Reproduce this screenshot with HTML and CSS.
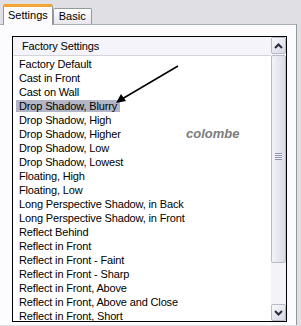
FILE: index.html
```html
<!DOCTYPE html>
<html lang="en">
<head>
    <meta charset="UTF-8">
    <title>Settings</title>
    <link rel="stylesheet" href="styles.css">
</head>
<body>
    <div class="tabs">
        <div class="tab active">Settings</div>
        <div class="tab">Basic</div>
    </div>

    <div class="panel">
        <div class="listbox">
            <div class="list-content">
                <div class="list-header">Factory Settings</div>
                <ul class="items">
                    <li><span>Factory Default</span></li>
                    <li><span>Cast in Front</span></li>
                    <li><span>Cast on Wall</span></li>
                    <li class="selected"><span>Drop Shadow, Blurry</span></li>
                    <li><span>Drop Shadow, High</span></li>
                    <li><span>Drop Shadow, Higher</span></li>
                    <li><span>Drop Shadow, Low</span></li>
                    <li><span>Drop Shadow, Lowest</span></li>
                    <li><span>Floating, High</span></li>
                    <li><span>Floating, Low</span></li>
                    <li><span>Long Perspective Shadow, in Back</span></li>
                    <li><span>Long Perspective Shadow, in Front</span></li>
                    <li><span>Reflect Behind</span></li>
                    <li><span>Reflect in Front</span></li>
                    <li><span>Reflect in Front - Faint</span></li>
                    <li><span>Reflect in Front - Sharp</span></li>
                    <li><span>Reflect in Front, Above</span></li>
                    <li><span>Reflect in Front, Above and Close</span></li>
                    <li><span>Reflect in Front, Short</span></li>
                </ul>
            </div>
            <div class="scrollbar">
                <div class="sb-btn">
                    <svg width="9" height="6" viewBox="0 0 9 6"><path d="M1 5 L4.5 1.5 L8 5" fill="none" stroke="#2b2b3a" stroke-width="2"/></svg>
                </div>
                <div class="sb-track">
                    <div class="sb-thumb">
                        <div class="grip"></div>
                    </div>
                </div>
                <div class="sb-btn">
                    <svg width="9" height="6" viewBox="0 0 9 6"><path d="M1 1 L4.5 4.5 L8 1" fill="none" stroke="#2b2b3a" stroke-width="2"/></svg>
                </div>
            </div>
        </div>
    </div>

    <!-- annotation drawn over the list -->
    <svg class="pointer" width="301" height="326" viewBox="0 0 301 326">
        <line x1="178" y1="66" x2="122" y2="99" stroke="#000" stroke-width="1.5"/>
        <polygon points="116,103 121,94 126,101" fill="#000"/>
    </svg>
    <div class="watermark">colombe</div>
</body>
</html>
```

FILE: styles.css
```css
body {
    margin: 0;
    width: 301px;
    height: 326px;
    overflow: hidden;
    background: #e0dfe3;
    font-family: "Liberation Sans", Arial, sans-serif;
    font-size: 11px;
    color: #000;
    position: relative;
}
.tabs {
    display: flex;
    align-items: flex-end;
    height: 20px;
    padding: 4px 0 0 3px;
}
.tab {
    box-sizing: border-box;
    height: 16px;
    padding: 0 5px;
    line-height: 15px;
    border: 1px solid #919b9c;
    border-bottom: none;
    border-radius: 2px 2px 0 0;
    background: linear-gradient(#ffffff, #e6e6ec);
}
.tab.active {
    height: 21px;
    margin-bottom: -1px;
    padding: 0 4px;
    line-height: 17px;
    border-top: 3px solid #f5a533;
    background: #fcfcfe;
    position: relative;
    z-index: 1;
}
.panel {
    width: 297px;
    height: 301px;
    box-sizing: border-box;
    border-top: 1px solid #a9b0b8;
    border-right: 1px solid #919b9c;
    background: #fcfcfe;
    padding: 11px 0 0 12px;
}
.listbox {
    display: flex;
    width: 275px;
    height: 286px;
    box-sizing: border-box;
    border: 1px solid #000;
    background: #fff;
}
.list-content {
    flex: 1;
    overflow: hidden;
    letter-spacing: -0.15px;
}
.list-header {
    height: 18px;
    line-height: 18px;
    padding-left: 9px;
    background: #f4f4fa;
    border-bottom: 1px solid #d4d4dc;
}
.items {
    list-style: none;
    margin: 0;
    padding: 1px 0 0 3px;
}
.items li {
    height: 14px;
    line-height: 14px;
    white-space: nowrap;
}
.items li span {
    padding: 0 3px;
}
.items li.selected span {
    background: #b2b5c6;
}
.scrollbar {
    width: 15px;
    display: flex;
    flex-direction: column;
    background: #f4f4f8;
}
.sb-btn {
    height: 17px;
    box-sizing: border-box;
    border: 1px solid #b6b8c8;
    border-radius: 2px;
    background: linear-gradient(135deg, #fafafd, #d4d6e2);
    display: flex;
    align-items: center;
    justify-content: center;
}
.sb-track {
    flex: 1;
    padding-top: 1px;
}
.sb-thumb {
    height: 208px;
    box-sizing: border-box;
    border: 1px solid #b8bac8;
    border-radius: 2px;
    background: linear-gradient(90deg, #f2f2f8, #dadbe6);
    display: flex;
    align-items: center;
    justify-content: center;
}
.grip {
    width: 7px;
    height: 7px;
    margin-top: -6px;
    background: repeating-linear-gradient(#8c90a8 0 1px, #f4f4fa 1px 2px);
}
.pointer {
    position: absolute;
    left: 0;
    top: 0;
    pointer-events: none;
}
.watermark {
    position: absolute;
    left: 186px;
    top: 126px;
    font-size: 13px;
    font-weight: bold;
    font-style: italic;
    color: #7c7c7c;
}
```
